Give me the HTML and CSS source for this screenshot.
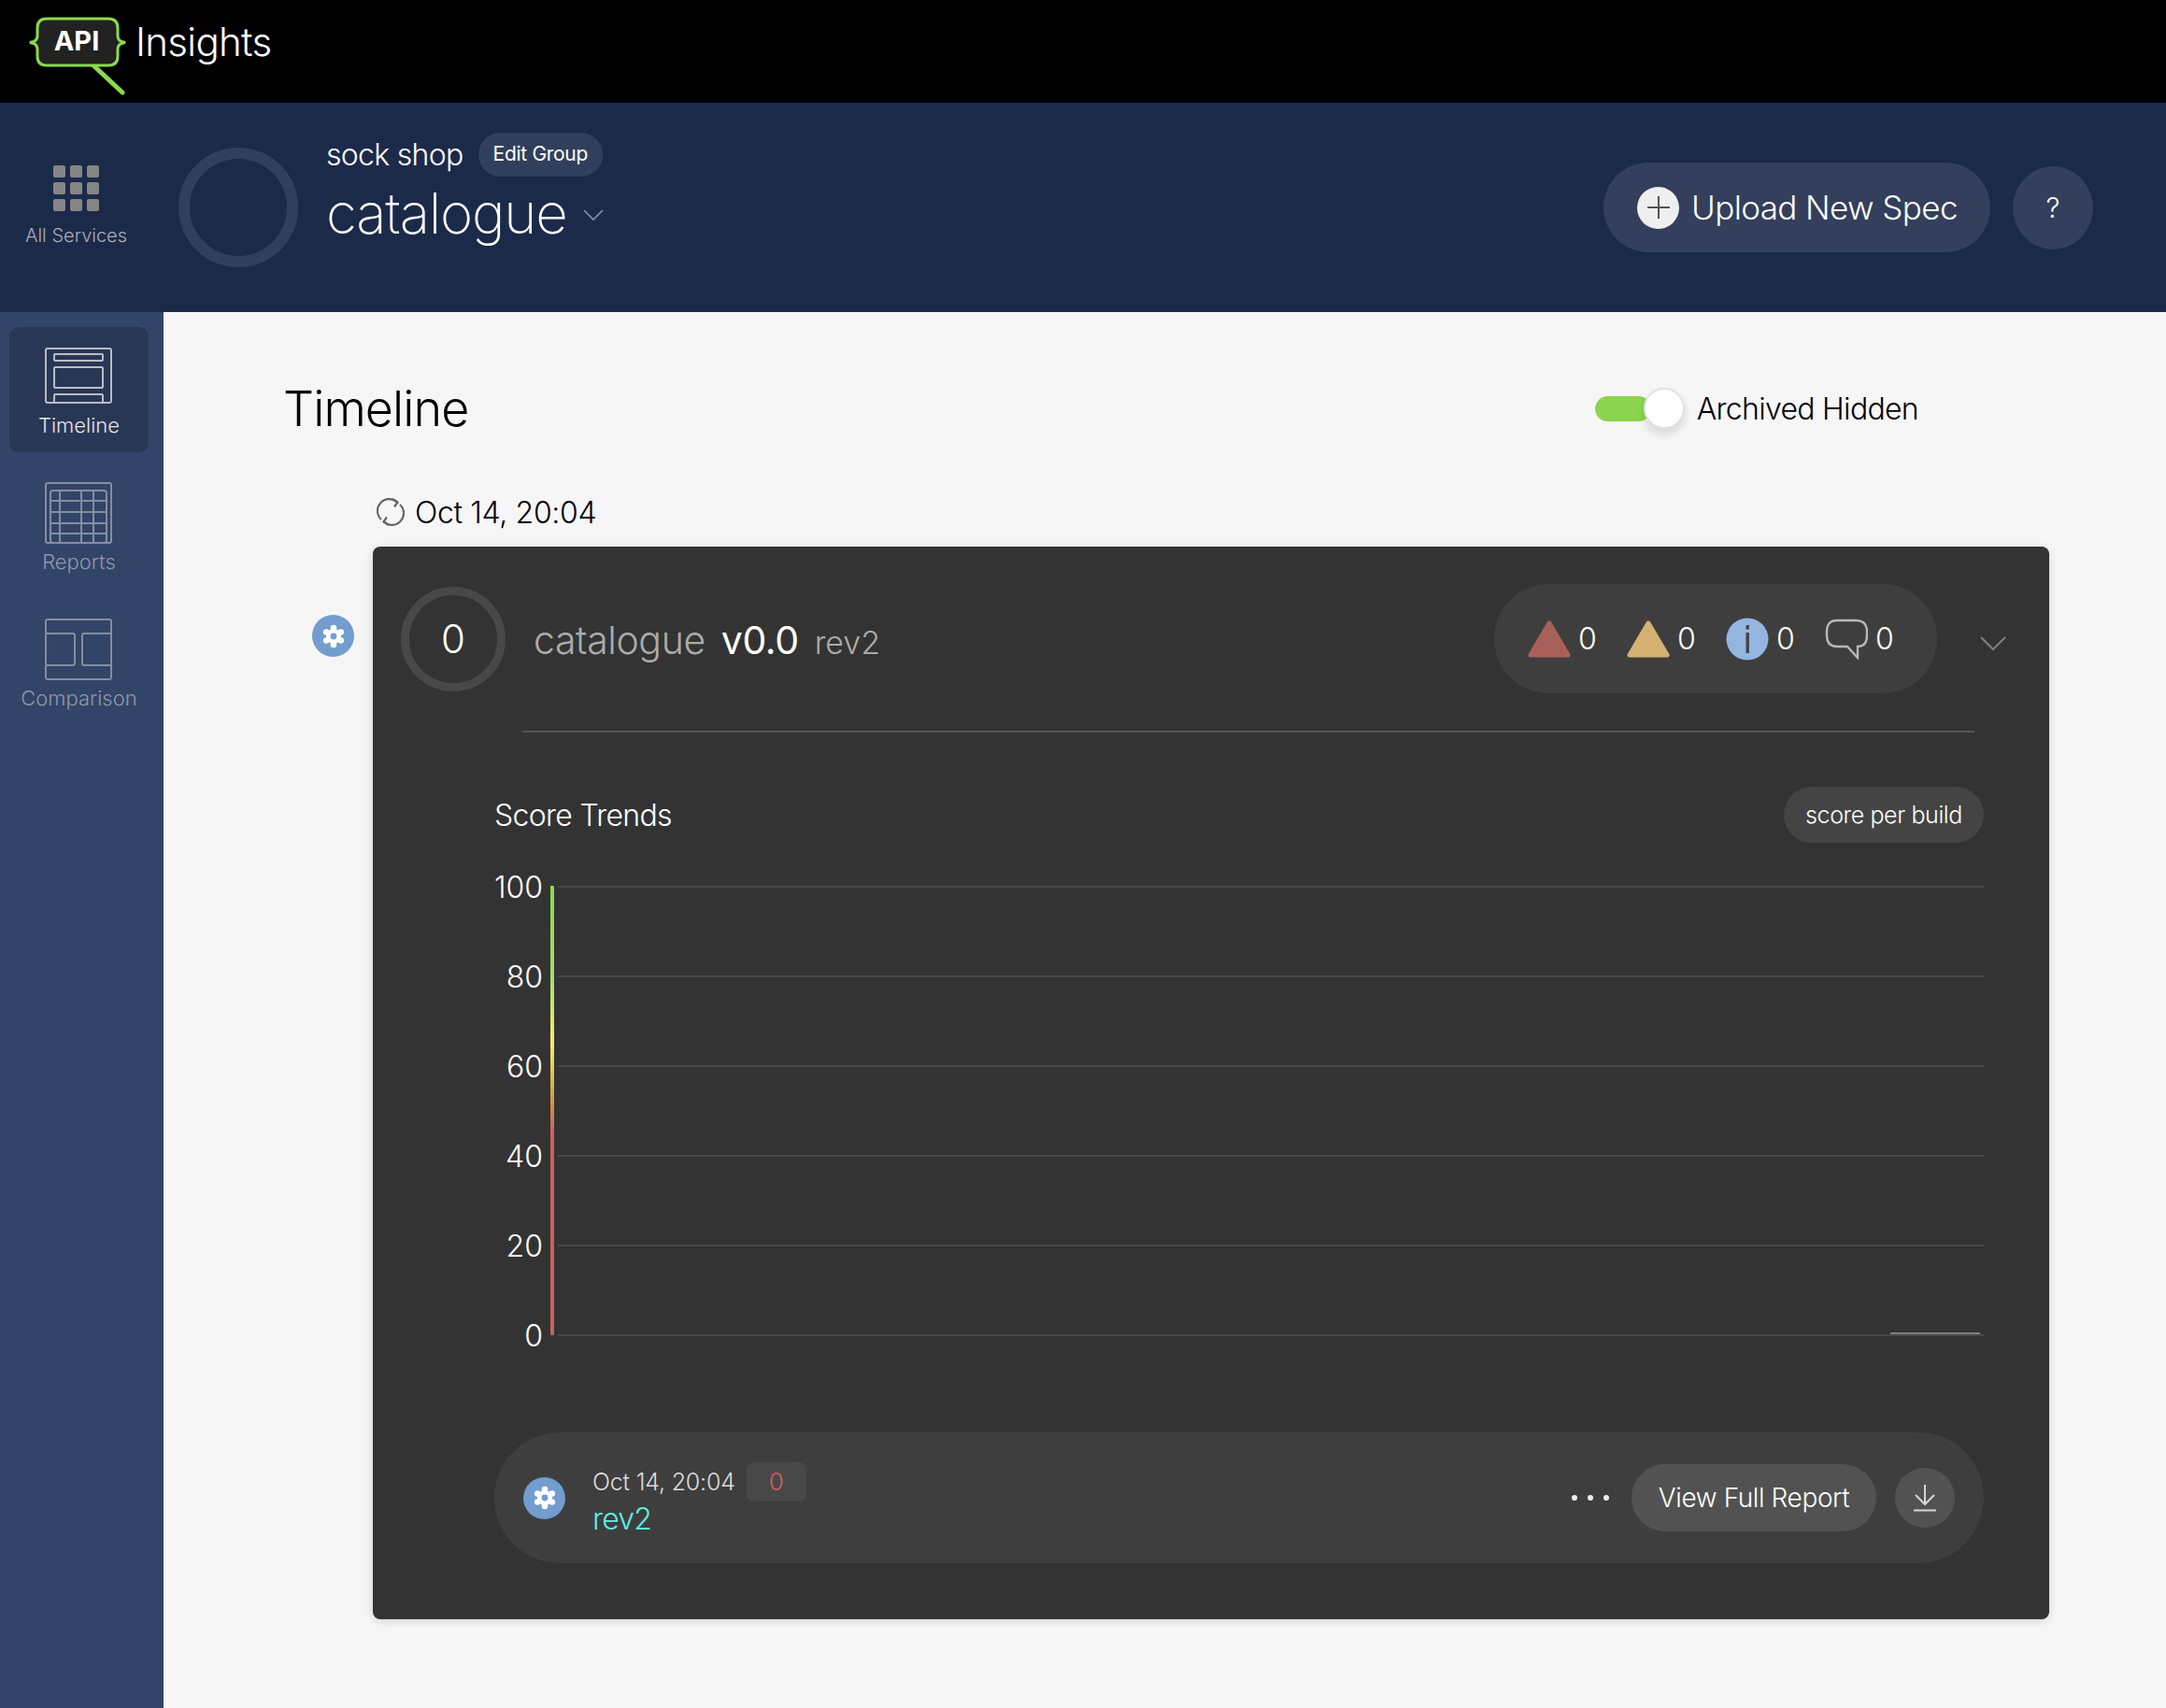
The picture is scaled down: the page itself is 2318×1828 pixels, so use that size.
FILE: index.html
```html
<!DOCTYPE html>
<html lang="en">
<head>
    <meta charset="UTF-8">
    <title>API Insights</title>
    <link rel="stylesheet" href="styles.css">
</head>
<body>
    <div class="topbar">
        <div class="logo">
            <svg class="logo-mark" width="106" height="84" viewBox="0 0 106 84">
                <path d="M70 52L101 81" stroke="#8cd94e" stroke-width="5" stroke-linecap="round" fill="none"/>
                <path d="M20 2H86Q96 2 96 12V20Q96 25 100 26.5L104 27.5L100 28.5Q96 30 96 35V42Q96 52 86 52H20Q10 52 10 42V35Q10 30 6 28.5L2 27.5L6 26.5Q10 25 10 20V12Q10 2 20 2Z" fill="#222" stroke="#8cd94e" stroke-width="3"/>
            </svg>
            <span class="logo-api">API</span>
            <span class="logo-name">Insights</span>
        </div>
    </div>

    <header class="service-header">
        <div class="all-services">
            <div class="app-grid">
                <i></i><i></i><i></i><i></i><i></i><i></i><i></i><i></i><i></i>
            </div>
            <span>All Services</span>
        </div>
        <div class="header-ring"></div>
        <div class="service-name">
            <div class="group-row">
                <span class="group-name">sock shop</span>
                <span class="edit-group">Edit Group</span>
            </div>
            <div class="name-row">
                <span class="name">catalogue</span>
                <svg width="24" height="14" viewBox="0 0 24 14"><path d="M2 2L12 12L22 2" stroke="#8b93a6" stroke-width="1.6" fill="none"/></svg>
            </div>
        </div>
        <div class="header-actions">
            <div class="upload-btn">
                <span class="plus">
                    <svg width="26" height="26" viewBox="0 0 26 26"><path d="M13 1V25M1 13H25" stroke="#555" stroke-width="2"/></svg>
                </span>
                Upload New Spec
            </div>
            <div class="help-btn">?</div>
        </div>
    </header>

    <div class="body-row">
        <nav class="sidebar">
            <div class="nav-item active">
                <svg width="72" height="60" viewBox="0 0 72 60" fill="none" stroke="#b9bcc4" stroke-width="2">
                    <rect x="1" y="1" width="70" height="58" rx="2"/>
                    <rect x="10" y="7" width="52" height="7" rx="1"/>
                    <rect x="10" y="21" width="52" height="22" rx="1"/>
                    <path d="M10 59V52Q10 50 11 50H61Q62 50 62 52V59"/>
                </svg>
                <span>Timeline</span>
            </div>
            <div class="nav-item">
                <svg width="72" height="66" viewBox="0 0 72 66" fill="none" stroke="#858da0" stroke-width="2">
                    <rect x="1" y="1" width="70" height="64" rx="2"/>
                    <rect x="6" y="9" width="60" height="56" rx="3"/>
                    <path d="M16 9V65M39 9V65M52 9V65M6 20H66M6 32H66M6 44H66M6 55H66"/>
                </svg>
                <span>Reports</span>
            </div>
            <div class="nav-item">
                <svg width="72" height="66" viewBox="0 0 72 66" fill="none" stroke="#858da0" stroke-width="2">
                    <rect x="1" y="1" width="70" height="64" rx="2"/>
                    <path d="M1 16H30Q32 16 32 18V48Q32 50 30 50H1M71 16H42Q40 16 40 18V48Q40 50 42 50H71"/>
                </svg>
                <span>Comparison</span>
            </div>
        </nav>

        <main class="content">
            <div class="title-row">
                <h1>Timeline</h1>
                <div class="archived">
                    <div class="switch"><div class="knob"></div></div>
                    <span>Archived Hidden</span>
                </div>
            </div>

            <div class="date-row">
                <svg width="30" height="30" viewBox="0 0 30 30" fill="none" stroke="#666" stroke-width="2.2">
                    <path d="M5 23A12.5 12.5 0 0 1 22 4.5M25 7A12.5 12.5 0 0 1 8 25.5"/>
                    <path d="M17 1L22.5 4.5L19 9.5M13 29L7.5 25.5L11 20.5"/>
                </svg>
                <span>Oct 14, 20:04</span>
            </div>

            <div class="timeline-row">
                <div class="gear-badge side-gear">
                    <svg width="26" height="26" viewBox="0 0 26 26"><use href="#gear"/></svg>
                </div>
                <section class="card">
                    <div class="card-head">
                        <div class="score-ring">0</div>
                        <div class="card-title">
                            <span class="t-name">catalogue</span>
                            <span class="t-ver">v0.0</span>
                            <span class="t-rev">rev2</span>
                        </div>
                        <div class="counts">
                            <svg width="46" height="40" viewBox="0 0 46 40"><path d="M23 3L43 37H3Z" fill="#a9605a" stroke="#a9605a" stroke-width="5" stroke-linejoin="round"/></svg>
                            <span>0</span>
                            <svg width="46" height="40" viewBox="0 0 46 40"><path d="M23 3L43 37H3Z" fill="#d5b273" stroke="#d5b273" stroke-width="5" stroke-linejoin="round"/></svg>
                            <span>0</span>
                            <svg width="46" height="46" viewBox="0 0 46 46"><circle cx="23" cy="23" r="22.5" fill="#93b6e0"/><rect x="21.5" y="8" width="3.4" height="4.6" fill="#444"/><rect x="21.5" y="16" width="3.4" height="22" fill="#444"/></svg>
                            <span>0</span>
                            <svg width="46" height="44" viewBox="0 0 46 44" fill="none"><path d="M13 2H33Q45 2 45 14V18Q45 30 35 30V42L24 30H13Q2 30 2 18V14Q2 2 13 2Z" stroke="#b8b8b8" stroke-width="2.4"/></svg>
                            <span>0</span>
                        </div>
                        <svg class="card-chevron" width="30" height="18" viewBox="0 0 30 18"><path d="M2 2L15 15L28 2" stroke="#808080" stroke-width="2" fill="none"/></svg>
                    </div>

                    <div class="card-divider"></div>

                    <div class="trends-head">
                        <span>Score Trends</span>
                        <span class="per-build">score per build</span>
                    </div>

                    <div class="chart">
                        <div class="chart-row"><span>100</span><i></i></div>
                        <div class="chart-row"><span>80</span><i></i></div>
                        <div class="chart-row"><span>60</span><i></i></div>
                        <div class="chart-row"><span>40</span><i></i></div>
                        <div class="chart-row"><span>20</span><i></i></div>
                        <div class="chart-row"><span>0</span><i></i></div>
                        <div class="score-bar"></div>
                        <div class="data-line"></div>
                    </div>

                    <div class="build-row">
                        <div class="gear-badge">
                            <svg width="26" height="26" viewBox="0 0 26 26"><use href="#gear"/></svg>
                        </div>
                        <div class="build-info">
                            <div class="build-top">
                                <span>Oct 14, 20:04</span>
                                <span class="build-score">0</span>
                            </div>
                            <div class="build-rev">rev2</div>
                        </div>
                        <div class="build-actions">
                            <div class="dots"><i></i><i></i><i></i></div>
                            <div class="report-btn">View Full Report</div>
                            <div class="download-btn">
                                <svg width="26" height="30" viewBox="0 0 26 30" fill="none" stroke="#d6d6d6" stroke-width="2"><path d="M13 1V22M3 12L13 22L23 12M1 28.5H25"/></svg>
                            </div>
                        </div>
                    </div>
                </section>
            </div>
        </main>
    </div>

    <svg width="0" height="0" class="defs">
        <defs>
            <g id="gear" fill="#fff">
                <path fill-rule="evenodd" d="M13 5a8 8 0 1 0 0 16a8 8 0 0 0 0-16Zm0 4.6a3.4 3.4 0 1 1 0 6.8a3.4 3.4 0 0 1 0-6.8Z"/>
                <circle cx="13" cy="4" r="3.3"/>
                <circle cx="13" cy="22" r="3.3"/>
                <circle cx="20.8" cy="8.5" r="3.3"/>
                <circle cx="20.8" cy="17.5" r="3.3"/>
                <circle cx="5.2" cy="8.5" r="3.3"/>
                <circle cx="5.2" cy="17.5" r="3.3"/>
            </g>
        </defs>
    </svg>
</body>
</html>
```

FILE: styles.css
```css
* {
    box-sizing: border-box;
}
body {
    margin: 0;
    height: 1828px;
    overflow: hidden;
    font-family: Inter, "Noto Sans", sans-serif;
    font-weight: 300;
    background: #f6f6f6;
    color: #000;
}
.defs {
    position: absolute;
}

/* top bar */
.topbar {
    height: 110px;
    background: #000;
    padding: 18px 0 0 30px;
}
.logo {
    position: relative;
    display: flex;
    align-items: flex-start;
}
.logo-mark {
    display: block;
}
.logo-api {
    position: absolute;
    left: 0;
    top: 8px;
    width: 104px;
    text-align: center;
    color: #fff;
    font-size: 29px;
    font-weight: 700;
    line-height: 36px;
}
.logo-name {
    margin-left: 9px;
    color: #fff;
    font-size: 42px;
    letter-spacing: -0.7px;
    line-height: 54px;
    font-weight: 300;
}

/* service header */
.service-header {
    height: 224px;
    background: #1c2a4a;
    display: flex;
    align-items: center;
    color: #fff;
}
.all-services {
    width: 163px;
    display: flex;
    flex-direction: column;
    align-items: center;
    color: #a9adb8;
    font-size: 20px;
    gap: 14px;
    margin-top: -3px;
}
.app-grid {
    display: grid;
    grid-template-columns: repeat(3, 13px);
    grid-template-rows: repeat(3, 13px);
    gap: 5px;
}
.app-grid i {
    background: #858585;
    border-radius: 2px;
}
.header-ring {
    width: 128px;
    height: 128px;
    margin-left: 28px;
    border: 12px solid #323f5c;
    border-radius: 50%;
}
.service-name {
    margin-left: 30px;
    margin-top: -36px;
}
.group-row {
    display: flex;
    align-items: center;
    gap: 16px;
    height: 48px;
}
.group-name {
    font-size: 32px;
    letter-spacing: -0.7px;
}
.edit-group {
    background: #323f5c;
    border-radius: 24px;
    padding: 0 16px;
    height: 47px;
    line-height: 46px;
    font-size: 21px;
    letter-spacing: -0.3px;
    font-weight: 400;
}
.name-row {
    display: flex;
    align-items: center;
    gap: 16px;
    height: 78px;
}
.name {
    font-size: 60px;
    font-weight: 200;
    letter-spacing: -1.2px;
}
.name-row svg {
    margin-top: 4px;
}
.header-actions {
    margin-left: auto;
    margin-right: 78px;
    display: flex;
    align-items: center;
    gap: 24px;
}
.upload-btn {
    width: 414px;
    height: 96px;
    border-radius: 48px;
    background: #333f5c;
    display: flex;
    align-items: center;
    padding-left: 36px;
    gap: 13px;
    font-size: 35px;
    letter-spacing: -0.6px;
}
.plus {
    width: 45px;
    height: 45px;
    border-radius: 50%;
    background: #efefef;
    display: flex;
    align-items: center;
    justify-content: center;
}
.help-btn {
    width: 86px;
    height: 89px;
    border-radius: 50%;
    background: #333f5c;
    display: flex;
    align-items: center;
    justify-content: center;
    font-size: 30px;
}

/* sidebar */
.body-row {
    display: flex;
    height: 1494px;
}
.sidebar {
    width: 175px;
    flex: none;
    background: #324468;
    padding: 16px 10px 0;
}
.nav-item {
    width: 149px;
    height: 134px;
    margin-bottom: 12px;
    padding-top: 20px;
    display: flex;
    flex-direction: column;
    align-items: center;
    gap: 6px;
    border-radius: 10px;
    color: #8f97aa;
    font-size: 22px;
}
.nav-item svg {
    display: block;
    flex: none;
    margin-left: -2px;
}
.nav-item.active {
    background: #283755;
    color: #e4e5e8;
    padding-top: 22px;
    gap: 10px;
}

/* main */
.content {
    flex: 1;
    padding: 66px 125px 0 128px;
}
.title-row {
    display: flex;
    align-items: center;
    height: 76px;
}
.title-row h1 {
    margin: 0;
    font-size: 52px;
    letter-spacing: -0.9px;
    font-weight: 300;
    line-height: 76px;
}
.archived {
    margin-left: auto;
    margin-right: 140px;
    display: flex;
    align-items: center;
    gap: 13px;
    font-size: 32px;
    letter-spacing: -0.7px;
    margin-top: -2px;
}
.switch {
    width: 60px;
    height: 27px;
    border-radius: 14px;
    background: #8bd44f;
    position: relative;
    margin-right: 36px;
}
.knob {
    position: absolute;
    left: 52px;
    top: -9px;
    width: 44px;
    height: 44px;
    border-radius: 50%;
    background: #fff;
    border: 2px solid #e2e2e2;
    box-shadow: 0 6px 10px rgba(0, 0, 0, 0.12);
}
.date-row {
    display: flex;
    align-items: center;
    gap: 11px;
    margin-top: 52px;
    margin-left: 100px;
    height: 40px;
    font-size: 32px;
    letter-spacing: -0.35px;
}
.timeline-row {
    display: flex;
    align-items: flex-start;
    margin-top: 17px;
}
.gear-badge {
    width: 45px;
    height: 45px;
    flex: none;
    border-radius: 50%;
    background: #729dce;
    display: flex;
    align-items: center;
    justify-content: center;
}
.side-gear {
    margin: 73px 20px 0 31px;
}
.card {
    width: 1794px;
    height: 1148px;
    background: #333;
    border-radius: 8px;
    box-shadow: 0 2px 10px rgba(0, 0, 0, 0.15);
    color: #fff;
    padding-top: 40px;
    flex: none;
}
.card-head {
    display: flex;
    align-items: center;
    height: 117px;
    padding-left: 30px;
}
.score-ring {
    width: 112px;
    height: 112px;
    border: 9px solid #484848;
    border-radius: 50%;
    display: flex;
    align-items: center;
    justify-content: center;
    font-size: 42px;
    flex: none;
}
.card-title {
    margin-left: 30px;
    display: flex;
    align-items: baseline;
    margin-top: 3px;
}
.t-name {
    font-size: 41px;
    letter-spacing: -0.4px;
    color: #ababab;
}
.t-ver {
    font-size: 41px;
    letter-spacing: -0.4px;
    font-weight: 400;
    margin-left: 17px;
}
.t-rev {
    font-size: 34px;
    color: #ababab;
    margin-left: 17px;
}
.counts {
    margin-left: auto;
    width: 474px;
    height: 117px;
    border-radius: 58px;
    background: #3e3e3e;
    display: flex;
    align-items: center;
    padding-left: 36px;
    font-size: 32px;
}
.counts svg {
    flex: none;
}
.counts span {
    width: 60px;
    padding-left: 8px;
}
.card-chevron {
    margin-left: 45px;
    margin-right: 45px;
    margin-top: 10px;
}
.card-divider {
    height: 2px;
    background: #555;
    margin: 40px 80px 0 160px;
}
.trends-head {
    display: flex;
    align-items: center;
    justify-content: space-between;
    margin: 58px 70px 0 130px;
    height: 60px;
    font-size: 32px;
    letter-spacing: -0.7px;
}
.per-build {
    width: 214px;
    height: 60px;
    border-radius: 30px;
    background: #444;
    text-align: center;
    line-height: 60px;
    font-size: 25px;
    letter-spacing: -0.4px;
}

/* chart */
.chart {
    position: relative;
    margin: -1px 70px 0 130px;
}
.chart-row {
    display: flex;
    align-items: center;
    height: 96px;
    font-size: 32px;
}
.chart-row span {
    width: 52px;
    text-align: right;
    flex: none;
}
.chart-row i {
    height: 2px;
    margin-left: 16px;
    flex: 1;
    background: #484848;
}
.score-bar {
    position: absolute;
    left: 60px;
    top: 47px;
    width: 4px;
    height: 481px;
    border-radius: 1px;
    background: linear-gradient(#8cd94e 0, #a5d968 20%, #f9ec6b 35%, #d4a63f 46%, #cd6060 55%, #cd6060 100%);
}
.data-line {
    position: absolute;
    right: 4px;
    top: 525px;
    width: 96px;
    height: 2px;
    background: #808080;
}

/* build row */
.build-row {
    display: flex;
    align-items: center;
    height: 140px;
    margin: 56px 70px 0 130px;
    padding: 0 31px;
    border-radius: 70px;
    background: #3e3e3e;
}
.build-info {
    margin-left: 29px;
    padding-top: 4px;
}
.build-top {
    display: flex;
    align-items: center;
    gap: 12px;
    font-size: 25px;
    letter-spacing: -0.2px;
    color: #dcdcdc;
    height: 42px;
}
.build-score {
    width: 64px;
    height: 42px;
    line-height: 42px;
    text-align: center;
    border-radius: 8px;
    background: #484848;
    color: #cd6060;
    font-size: 26px;
}
.build-rev {
    font-size: 32px;
    letter-spacing: -0.8px;
    color: #5fefe0;
    line-height: 38px;
}
.build-actions {
    margin-left: auto;
    display: flex;
    align-items: center;
}
.dots {
    display: flex;
    gap: 11px;
    margin-right: 24px;
}
.dots i {
    width: 6px;
    height: 6px;
    border-radius: 50%;
    background: #eee;
}
.report-btn {
    width: 262px;
    height: 72px;
    border-radius: 36px;
    background: #525252;
    text-align: center;
    line-height: 72px;
    font-size: 28px;
    letter-spacing: -0.4px;
}
.download-btn {
    width: 64px;
    height: 64px;
    margin-left: 20px;
    border-radius: 50%;
    background: #525252;
    display: flex;
    align-items: center;
    justify-content: center;
}
```
